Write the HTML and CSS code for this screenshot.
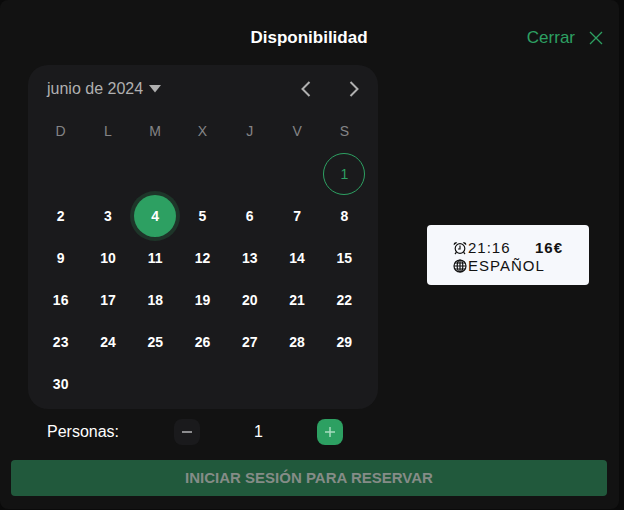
FILE: index.html
```html
<!DOCTYPE html>
<html lang="es">
<head>
<meta charset="utf-8">
<meta name="viewport" content="width=device-width, initial-scale=1">
<title>Disponibilidad</title>
<link rel="stylesheet" href="styles.css">
</head>
<body>
<main class="dialog">
  <header class="dialog-header">
    <h1 class="dialog-title">Disponibilidad</h1>
    <button class="close" type="button">
      Cerrar
      <svg class="close-icon" viewBox="0 0 14 14" aria-hidden="true"><path d="M1 1 13 13M13 1 1 13"/></svg>
    </button>
  </header>

  <div class="dialog-body">
    <div class="booking">
      <section class="calendar">
        <div class="calendar-header">
          <button class="month" type="button">junio de 2024
            <svg class="caret" viewBox="0 0 12 8" aria-hidden="true"><path d="M0 0H12L6 7.500Z"/></svg>
          </button>
          <div class="calendar-nav">
            <button class="nav" type="button" aria-label="Mes anterior"><svg viewBox="0 0 12 16" aria-hidden="true"><path d="M9.500 1 2.500 8 9.500 15"/></svg></button>
            <button class="nav" type="button" aria-label="Mes siguiente"><svg viewBox="0 0 12 16" aria-hidden="true"><path d="M2.500 1 9.500 8 2.500 15"/></svg></button>
          </div>
        </div>
        <table class="days">
          <thead>
            <tr><th>D</th><th>L</th><th>M</th><th>X</th><th>J</th><th>V</th><th>S</th></tr>
          </thead>
          <tbody>
            <tr><td></td><td></td><td></td><td></td><td></td><td></td><td><button class="day day-today" type="button">1</button></td></tr>
            <tr><td><button class="day" type="button">2</button></td><td><button class="day" type="button">3</button></td><td><button class="day day-selected" type="button">4</button></td><td><button class="day" type="button">5</button></td><td><button class="day" type="button">6</button></td><td><button class="day" type="button">7</button></td><td><button class="day" type="button">8</button></td></tr>
            <tr><td><button class="day" type="button">9</button></td><td><button class="day" type="button">10</button></td><td><button class="day" type="button">11</button></td><td><button class="day" type="button">12</button></td><td><button class="day" type="button">13</button></td><td><button class="day" type="button">14</button></td><td><button class="day" type="button">15</button></td></tr>
            <tr><td><button class="day" type="button">16</button></td><td><button class="day" type="button">17</button></td><td><button class="day" type="button">18</button></td><td><button class="day" type="button">19</button></td><td><button class="day" type="button">20</button></td><td><button class="day" type="button">21</button></td><td><button class="day" type="button">22</button></td></tr>
            <tr><td><button class="day" type="button">23</button></td><td><button class="day" type="button">24</button></td><td><button class="day" type="button">25</button></td><td><button class="day" type="button">26</button></td><td><button class="day" type="button">27</button></td><td><button class="day" type="button">28</button></td><td><button class="day" type="button">29</button></td></tr>
            <tr><td><button class="day" type="button">30</button></td><td></td><td></td><td></td><td></td><td></td><td></td></tr>
          </tbody>
        </table>
      </section>

      <div class="people">
        <span class="people-label">Personas:</span>
        <div class="stepper">
          <button class="step" type="button" aria-label="Quitar persona"><svg viewBox="0 0 10 10" aria-hidden="true"><path class="minus" d="M0 5H10"/></svg></button>
          <output class="people-count">1</output>
          <button class="step step-add" type="button" aria-label="Agregar persona"><svg viewBox="0 0 10 10" aria-hidden="true"><path class="plus" d="M0 5H10M5 0V10"/></svg></button>
        </div>
      </div>
    </div>

    <div class="sessions">
      <button class="session" type="button">
        <span class="session-info">
          <span class="session-line">
            <svg class="session-icon" viewBox="0 0 14 14" aria-hidden="true"><circle cx="7" cy="7.500" r="4.800"/><path d="M7 4.500V8H5M3.500 11.200 2 13M10.500 11.200 12 13"/><path class="bells" d="M.8 4.200C.2 2 2.300 .4 4.200 1.700ZM13.200 4.200C13.800 2 11.700 .4 9.800 1.700Z"/></svg>21:16
          </span>
          <span class="session-line">
            <svg class="session-icon" viewBox="0 0 14 14" aria-hidden="true"><circle cx="7" cy="7" r="6"/><ellipse cx="7" cy="7" rx="2.800" ry="6"/><path d="M7 1V13M1 7H13M2 4H12M2 10H12"/></svg>ESPAÑOL
          </span>
        </span>
        <strong class="price">16€</strong>
      </button>
    </div>
  </div>

  <footer class="dialog-footer">
    <button class="reserve" type="button" disabled>INICIAR SESIÓN PARA RESERVAR</button>
  </footer>
</main>
</body>
</html>
```

FILE: styles.css
```css
* {
  box-sizing: border-box;
}

body {
  margin: 0;
  padding: 0 5px 1px 0;
  background: #0a0a0a;
  color: #fff;
  font: 16px/20px "Liberation Sans", Arial, sans-serif;
}

button {
  margin: 0;
  padding: 0;
  border: 0;
  background: none;
  color: inherit;
  font: inherit;
}

svg {
  display: block;
  fill: none;
  stroke: currentColor;
}

.dialog {
  padding: 0 12px 13px 11px;
  border-radius: 8px;
  background: #121212;
}

.dialog-header {
  display: grid;
  grid-template-columns: 1fr auto 1fr;
  align-items: center;
  height: 65px;
  padding-top: 10px;
  font-size: 17px;
}

.dialog-title {
  grid-column: 2;
  margin: 0;
  font-size: 17px;
}

.close {
  display: flex;
  align-items: center;
  justify-self: end;
  gap: 14px;
  margin-right: 4px;
  color: #2da062;
}

.close-icon {
  width: 14px;
  height: 14px;
  stroke-width: 1.3;
}

.dialog-body {
  display: flex;
  gap: 19px;
  margin-right: -12px;
  padding-left: 17px;
}

.booking {
  flex: 0 0 350px;
}

.calendar {
  padding: 0 10px 4px 9px;
  border-radius: 20px;
  background: #1a1a1c;
}

.calendar-header {
  display: flex;
  align-items: center;
  justify-content: space-between;
  height: 46px;
  padding: 2px 8px 0 10px;
  color: #b0b0b0;
}

.month {
  display: flex;
  align-items: center;
  gap: 6px;
}

.caret {
  width: 12px;
  height: 8px;
  fill: currentColor;
  stroke: none;
}

.calendar-nav {
  display: flex;
  gap: 36px;
}

.nav svg {
  width: 12px;
  height: 16px;
  stroke-width: 2;
}

.days {
  width: 100%;
  border-collapse: collapse;
  table-layout: fixed;
  font-size: 14px;
}

.days th {
  height: 42px;
  padding: 0 0 2px;
  color: #848486;
  font-weight: 400;
}

.days td {
  height: 42px;
  padding: 0;
}

.day {
  display: block;
  width: 42px;
  height: 42px;
  margin: 0 auto;
  border-radius: 50%;
  font-weight: 700;
}

.day-today {
  border: 1px solid #2da062;
  color: #2da062;
  font-weight: 400;
}

.day-selected {
  background: #2da062;
  box-shadow: 0 0 0 4px #1e3529;
}

.people {
  display: flex;
  align-items: center;
  justify-content: space-between;
  padding: 10px 35px 0 19px;
}

.stepper {
  display: flex;
  align-items: center;
  justify-content: space-between;
  width: 169px;
}

.step {
  display: grid;
  place-items: center;
  width: 26px;
  height: 26px;
  border-radius: 8px;
  background: #1a1a1c;
  color: #8c8c8e;
}

.step svg {
  width: 10px;
  height: 10px;
  stroke-width: 2;
}

.step-add {
  background: #2da062;
  color: #a8dcc0;
}

.step-add svg {
  stroke-width: 1.5;
}

.sessions {
  display: grid;
  flex: 1;
  place-items: center;
}

.session {
  display: flex;
  justify-content: space-between;
  width: 162px;
  padding: 14px 26px 10px;
  border-radius: 4px;
  background: #f6f8fc;
  color: #121212;
  font-size: 15px;
  line-height: 18px;
  letter-spacing: 1px;
  text-align: left;
  white-space: nowrap;
}

.session-info {
  flex: 1;
  min-width: 0;
}

.session-line {
  display: flex;
  align-items: center;
  gap: 1px;
}

.session-icon {
  flex: none;
  width: 14px;
  height: 14px;
  stroke-width: 1.2;
}

.bells {
  fill: currentColor;
  stroke: none;
}

.price {
  flex: none;
}

.dialog-footer {
  padding-top: 15px;
}

.reserve {
  display: block;
  width: 100%;
  height: 36px;
  border-radius: 4px;
  background: #21593c;
  color: #858c87;
  font-size: 15px;
  font-weight: 700;
}
```
